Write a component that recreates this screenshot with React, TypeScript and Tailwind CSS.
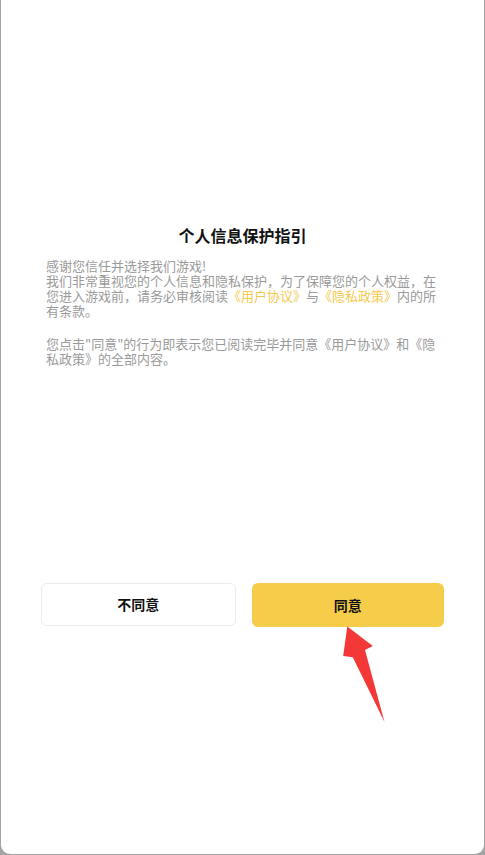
import React from "react";

export default function App() {
  return (
    <div
      className="w-[485px] h-[855px] bg-[#a3a3a3] px-[1px] pb-[1px] overflow-hidden"
      style={{ fontFamily: '"Noto Sans CJK SC", "Noto Sans", sans-serif' }}
    >
      <div className="relative h-full w-full bg-white rounded-b-[9px] flex flex-col">
        <div className="pt-[223px] text-center text-[16px] leading-6 font-bold text-[#111]">
          个人信息保护指引
        </div>
        <div className="px-[45px] mt-[11px] text-[13px] leading-[15px] text-[#9a9a9a]">
          <p>
            感谢您信任并选择我们游戏!
            <br />
            我们非常重视您的个人信息和隐私保护，为了保障您的个人权益，在您进入游戏前，请务必审核阅读
            <span className="inline-block h-[15px] leading-[15px] text-[#f5c94c]">《用户协议》</span>与
            <span className="inline-block h-[15px] leading-[15px] text-[#f5c94c]">《隐私政策》</span>内的所有条款。
          </p>
          <p className="mt-[18px]">
            您点击"同意"的行为即表示您已阅读完毕并同意《用户协议》和《隐
            <br />
            私政策》的全部内容。
          </p>
        </div>
        <div className="mt-[217px] px-[40px] flex gap-[16px]">
          <button className="flex-1 h-[43px] rounded-[6px] border border-[#ebebeb] bg-white text-[14px] font-bold text-[#111]">
            不同意
          </button>
          <button className="flex-1 h-[44px] rounded-[6px] bg-[#f6cd4a] text-[14px] font-bold text-[#111]">
            同意
          </button>
        </div>
        <svg
          className="absolute left-0 top-0 pointer-events-none"
          width="485"
          height="855"
          viewBox="1 0 485 855"
        >
          <polygon
            points="347.3,626.5 372.8,646 365,650 384.5,722 352.8,657.3 343.2,656"
            fill="#f43838"
          />
        </svg>
      </div>
    </div>
  );
}
